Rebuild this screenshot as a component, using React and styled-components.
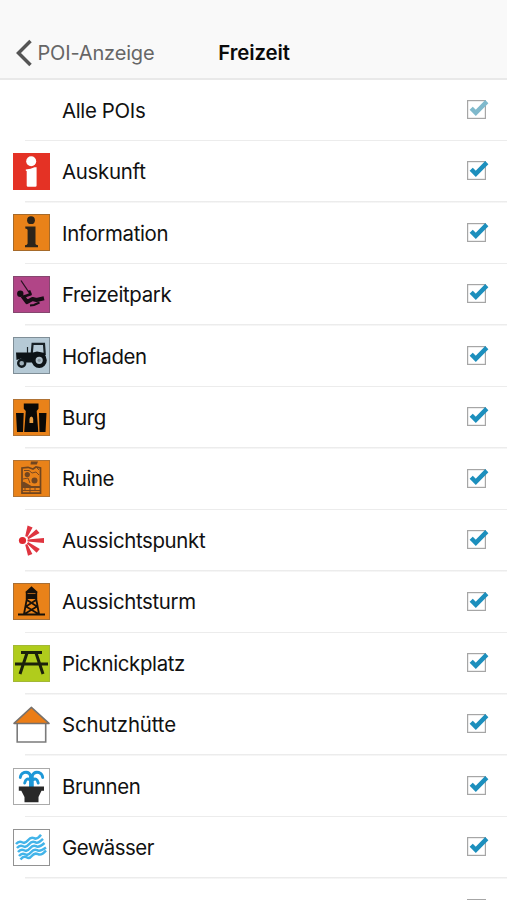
import React from "react";
import styled, { createGlobalStyle } from "styled-components";

const GlobalStyle = createGlobalStyle`
  * { box-sizing: border-box; }
  html, body { margin: 0; background: #fff; overflow: hidden; }
  body { font-family: Inter, "Liberation Sans", sans-serif; color: #111; }
`;

const Screen = styled.main`
  height: 900px;
  overflow: hidden;
  background: #fff;
`;

const NavBar = styled.header`
  height: 80px;
  padding: 27px 14px 0 15px;
  display: grid;
  grid-template-columns: 1fr auto 1fr;
  align-items: center;
  background: #f9f9f9;
  border-bottom: 2px solid #e9e9e9;
`;

const BackButton = styled.button`
  display: flex;
  align-items: center;
  gap: 4.5px;
  padding: 0;
  border: 0;
  background: none;
  color: #666;
  font: 400 20px/26px Inter, sans-serif;
  letter-spacing: -0.17px;
  white-space: nowrap;
`;

const Title = styled.h1`
  margin: 0;
  color: #0a0a0a;
  font-size: 20.4px;
  line-height: 26px;
  font-weight: 600;
  letter-spacing: -0.1px;
`;

const List = styled.ul`
  margin: 0;
  padding: 0;
  list-style: none;
`;

const Row = styled.li`
  height: 61.46px;
  padding: 0 18px 0 13px;
  display: grid;
  grid-template-columns: 37px 1fr 23px;
  column-gap: 12px;
  align-items: center;
  background: linear-gradient(#ececec, #ececec) 25px 100% / 100% 1.5px no-repeat;
`;

const IconSlot = styled.span`
  width: 37px;
  height: 37px;
  margin-bottom: 1.4px;
  svg { display: block; }
`;

const Label = styled.span`
  font-size: 20.4px;
  line-height: 28px;
  letter-spacing: ${(p) => p.$spacing}px;
  white-space: nowrap;
`;

const CheckSvg = styled.svg`
  display: block;
  margin-bottom: 2.6px;
`;

const Check = ({ dim, empty }) => (
  <CheckSvg width="23" height="23" viewBox="0 0 23 23">
    <rect x="1.6" y="2.6" width="17.8" height="17.8" fill="#fff" stroke="#a6a6a6" strokeWidth="1.2" />
    {!empty && (
      <path d="M5.2 10.2 L9.8 14.8 L20.8 3.6" fill="none" stroke={dim ? "#7fb9cc" : "#1c8fbd"} strokeWidth="4.4" />
    )}
  </CheckSvg>
);

const Tile = ({ fill, stroke, children }) => (
  <svg width="37" height="37" viewBox="0 0 37 37">
    <rect x="0.5" y="0.5" width="36" height="36" fill={fill} stroke={stroke} />
    {children}
  </svg>
);

const icons = {
  auskunft: (
    <Tile fill="#e43225" stroke="#e43225">
      <circle cx="18.2" cy="8.2" r="5" fill="#fff" />
      <path d="M12.8 16.5 Q18 16 21.5 14.2 H23.6 V32.5 Q23.6 33.8 22.3 33.8 H15 Q13.7 33.8 13.7 32.5 V18 L12.8 17.7Z" fill="#fff" />
    </Tile>
  ),
  information: (
    <Tile fill="#e98219" stroke="#a66a2a">
      <circle cx="18" cy="6.2" r="3.9" fill="#2c241b" />
      <path d="M12.3 12.6 H22.5 V30 Q22.7 31 25 31.2 V33.2 H12 V31.2 Q14.5 31 14.6 29.5 V16 Q14.5 14.7 12.3 14.6Z" fill="#2c241b" />
    </Tile>
  ),
  park: (
    <Tile fill="#b14587" stroke="#85476f">
      <path d="M8 4.5 L15.7 16" stroke="#26131f" strokeWidth="1.3" />
      <circle cx="7.3" cy="17.8" r="3.2" fill="#160d13" />
      <path d="M9.5 20 L14 26 L19.5 23 L23.5 24 L31 22.3" fill="none" stroke="#160d13" strokeWidth="4.2" strokeLinejoin="round" />
      <path d="M11 20.5 L17.6 18.3 L16 14.5" fill="none" stroke="#160d13" strokeWidth="2.6" strokeLinejoin="round" />
      <path d="M17 29.4 L21 29 L26.5 26.5" fill="none" stroke="#160d13" strokeWidth="2" />
    </Tile>
  ),
  hof: (
    <Tile fill="#b5c9d5" stroke="#7f8e97">
      <path d="M18.8 16 L19.6 6.8 H31 L31.8 18" fill="none" stroke="#182126" strokeWidth="2.2" />
      <path d="M3 15.5 H20 L24 14.6 L31.8 16 L33 22 L20 25.5 H12 L8 21.5 L3.5 23Z" fill="#0d1317" />
      <circle cx="26.2" cy="23.3" r="5.6" fill="#aebfca" stroke="#0d1317" strokeWidth="4" />
      <circle cx="26.2" cy="23.3" r="1.6" fill="#8796a0" />
      <circle cx="8.7" cy="26.2" r="3.5" fill="#9eafb9" stroke="#11181c" strokeWidth="2.4" />
      <path d="M14.5 10 V16" stroke="#182126" strokeWidth="1.2" />
    </Tile>
  ),
  burg: (
    <Tile fill="#e98219" stroke="#b07335">
      <path d="M10.8 4.5 H25.5 V9.8 L23.7 12 L25.3 33 H11.2 L12.8 12 L10.8 9.8Z" fill="#0b0906" />
      <path d="M3 14 H10.7 L10 33 H4Z M26 14 H33.5 L32.5 33 H26.5Z" fill="#0b0906" />
      <path d="M16.5 24 V20 Q16.8 17.8 18.3 17.5 Q20 17.8 20.2 20 V24Z" fill="#eba044" />
    </Tile>
  ),
  ruine: (
    <Tile fill="#e98219" stroke="#b07335">
      <path d="M9 8 V33.2 H27.5 V8 L23 7 L20 9 L15 7.3Z" fill="none" stroke="#70451f" strokeWidth="1.7" />
      <path d="M8.5 22.5 L11 21.8 L18.5 26 H27.5 V28 H9Z M18 1.5 H25 L23.8 4.6 H17.5Z" fill="#724620" />
      <circle cx="14.3" cy="14.5" r="2.6" fill="#724620" />
      <circle cx="21.5" cy="20.5" r="3" fill="#724620" />
      <path d="M11 10.5 H16 L19 13 L23 12 L26 15 M10 19 L15 18 L17 23 M9.5 30.5 H27 M12 28 V31 M17 28 V33 M22 27 V31 M23 7 L26 10" fill="none" stroke="#7a4920" strokeWidth="1" />
    </Tile>
  ),
  punkt: (
    <svg width="37" height="37" viewBox="0 0 37 37">
      <circle cx="9.5" cy="18.5" r="3.6" fill="#df2830" />
      <g fill="#df3540">
        <path d="M12.2 14.2 L14.6 3.5 L19.6 5.6 L14.4 15Z M14.3 15.4 L23.3 7.2 L26.6 11 L15.4 17.2Z M14.5 17.5 L31 16 V21 L14.5 19.5Z M15.2 20 L26.8 27.1 L23.6 30.7 L13.8 21.6Z M14.2 22 L19.4 32 L15 33.8 L12.2 22.8Z" />
      </g>
    </svg>
  ),
  turm: (
    <Tile fill="#e98219" stroke="#a86f35">
      <path d="M12 9.3 L18.5 3.3 L25 9.3Z M12.8 9 H24.2 V16 H12.8Z" fill="#17110a" />
      <path d="M14 15 L11 31 M23 15 L26 31 M14 17 L24 23.5 M23 17 L13 23.5 M13 23.5 L25.5 31 M24 23.5 L11.5 31 M5 31.5 H32" fill="none" stroke="#17110a" strokeWidth="1.8" />
      <path d="M14.5 10.5 H22.5" stroke="#a86019" strokeWidth="1" />
    </Tile>
  ),
  picknick: (
    <Tile fill="#b0cc1c" stroke="#a3b836">
      <path d="M8 7.5 H29 M2 19 H35 M14 8 L7 29 M23 8 L30 29" fill="none" stroke="#1b210b" strokeWidth="3" />
    </Tile>
  ),
  huette: (
    <svg width="37" height="37" viewBox="0 0 37 37">
      <path d="M4.2 17 V36 H32.7 V17" fill="#fff" stroke="#7b7b7b" strokeWidth="1.6" />
      <path d="M1 17.4 L18.4 1.4 L36 17.4Z" fill="#eb7d16" stroke="#77716c" strokeWidth="1.5" strokeLinejoin="round" />
    </svg>
  ),
  brunnen: (
    <Tile fill="#fff" stroke="#aaa">
      <path d="M17.5 19 V8 M19.3 19 V8 M17.8 8 Q16 3 11 4.5 Q7.5 6 7.3 9.5 M19 8 Q21 3 26 4.5 Q29.5 6 29.7 9.5 M17.5 12 Q13 9 11.7 15 M19.5 12 Q24 9 25.2 15" fill="none" stroke="#1d98d8" strokeWidth="2.9" strokeLinecap="round" />
      <path d="M5.8 18.5 H31 V22.8 H28.5 L25.5 29 V34.3 H11.5 V29 L8.3 22.8 H5.8Z" fill="#292929" />
    </Tile>
  ),
  wasser: (
    <Tile fill="#fff" stroke="#929292">
      <g fill="none" stroke="#42b4e9" strokeWidth="2.5">
        <path d="M3 15 Q6 11.5 9 13.3 T15 11.3 T21 9.2 T28 5.8" />
        <path d="M4 19 Q7 15.5 10 17.3 T16 15.3 T22 13.2 T30 9.8" />
        <path d="M5 23 Q8 19.5 11 21.3 T17 19.3 T23 17.2 T31.5 14" />
        <path d="M6 27 Q9 23.5 12 25.3 T18 23.3 T24 21.2 T33 18.5" />
        <path d="M7.5 30.5 Q10.5 26.5 13.5 28.3 T19 26.8 T25 25.2 T33 21.5" />
      </g>
    </Tile>
  ),
};

const pois = [
  { label: "Alle POIs", dim: true },
  { label: "Auskunft", icon: "auskunft", spacing: -0.27 },
  { label: "Information", icon: "information" },
  { label: "Freizeitpark", icon: "park" },
  { label: "Hofladen", icon: "hof", spacing: -0.38 },
  { label: "Burg", icon: "burg" },
  { label: "Ruine", icon: "ruine", spacing: -0.4 },
  { label: "Aussichtspunkt", icon: "punkt" },
  { label: "Aussichtsturm", icon: "turm" },
  { label: "Picknickplatz", icon: "picknick" },
  { label: "Schutzhütte", icon: "huette", spacing: -0.14 },
  { label: "Brunnen", icon: "brunnen", spacing: -0.38 },
  { label: "Gewässer", icon: "wasser", spacing: -0.52 },
  { label: "", empty: true },
];

export default function App() {
  return (
    <Screen>
      <GlobalStyle />
      <NavBar>
        <BackButton>
          <svg width="18" height="28" viewBox="0 0 18 28">
            <path d="M15.5 2 L3.5 14 L15.5 26" fill="none" stroke="#555" strokeWidth="3.5" />
          </svg>
          POI-Anzeige
        </BackButton>
        <Title>Freizeit</Title>
      </NavBar>
      <List>
        {pois.map((poi, i) => (
          <Row key={i}>
            <IconSlot>{icons[poi.icon]}</IconSlot>
            <Label $spacing={poi.spacing ?? -0.34}>{poi.label}</Label>
            <Check dim={poi.dim} empty={poi.empty} />
          </Row>
        ))}
      </List>
    </Screen>
  );
}
